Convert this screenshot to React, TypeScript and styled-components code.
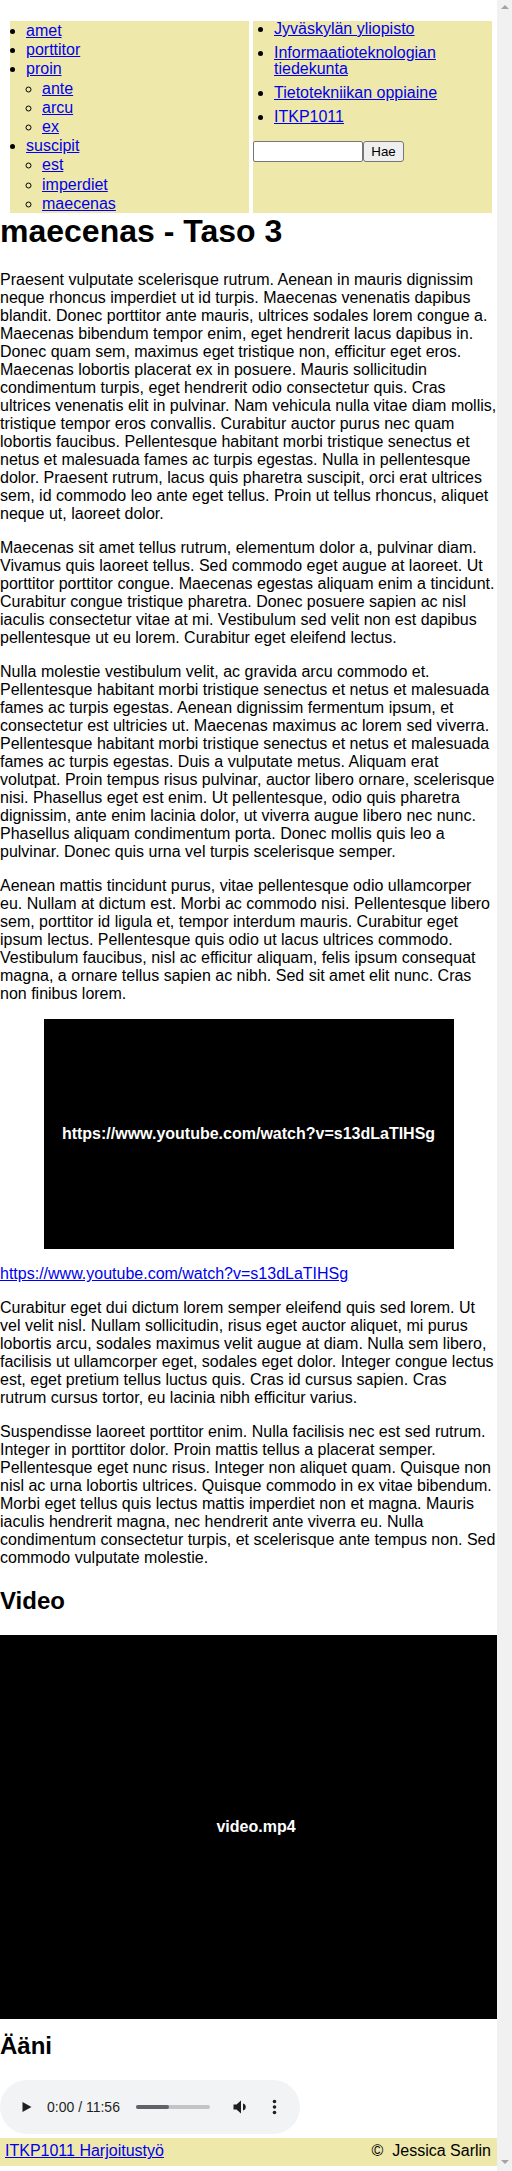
import styled, { createGlobalStyle } from 'styled-components';

const GlobalStyle = createGlobalStyle`
  html, body {
    margin: 0;
    padding: 0;
    background: #fff;
  }
  body {
    font-family: "Liberation Sans", Arial, sans-serif;
    font-size: 16px;
    color: #000;
  }
  a {
    color: #0000ee;
  }
`;

const Page = styled.div`
  display: flex;
  height: 100vh;
  overflow: hidden;
`;

const Main = styled.div`
  width: 497px;
  flex: none;
`;

const Scrollbar = styled.div`
  width: 15px;
  flex: none;
  box-sizing: border-box;
  padding: 5px 0 7px;
  background: #f1f1f1;
  display: flex;
  flex-direction: column;
  justify-content: space-between;
  align-items: center;
`;

const ScrollArrow = styled.span<{ $down?: boolean }>`
  width: 0;
  height: 0;
  border-left: 4px solid transparent;
  border-right: 4px solid transparent;
  ${({ $down }) =>
    $down ? 'border-top: 4px solid #a3a3a3;' : 'border-bottom: 4px solid #a3a3a3;'}
`;

const Header = styled.header`
  display: grid;
  grid-template-columns: 239px 239px;
  column-gap: 4px;
  padding: 21px 0 0 10px;
`;

const NavPanel = styled.nav`
  background: #eee8aa;
`;

const MenuList = styled.ul`
  margin: 0;
  padding-left: 16px;
  list-style: disc;
  line-height: 19.2px;
`;

const SubMenuList = styled.ul`
  margin: 0;
  padding-left: 16px;
  list-style: circle;
`;

const CrumbList = styled.ul`
  margin: 0;
  padding-left: 21px;
  list-style: disc;
`;

const CrumbItem = styled.li`
  line-height: 16px;
  margin-bottom: 8px;
`;

// margin collapses with the last crumb's 8px, so 16px lands the field at y=141
const SearchForm = styled.form`
  display: flex;
  margin-top: 16px;
`;

const SearchInput = styled.input`
  box-sizing: border-box;
  width: 110px;
  height: 21px;
  margin: 0;
  padding: 1px 2px;
  border: 1px solid #767676;
  border-radius: 2px;
  background: #fff;
  font: 13.33px "Liberation Sans", Arial, sans-serif;
`;

const SearchButton = styled.button`
  box-sizing: border-box;
  width: 41px;
  height: 21px;
  margin: 0;
  padding: 1px 6px;
  border: 1px solid #767676;
  border-radius: 3px;
  background: #efefef;
  color: #000;
  font: 13.33px "Liberation Sans", Arial, sans-serif;
`;

const Title = styled.h1`
  margin: 0 0 21.44px;
  font-size: 32px;
  line-height: 37px;
  font-weight: 700;
`;

const SectionTitle = styled.h2<{ $top?: number; $bottom?: number }>`
  margin: ${({ $top = 19.92 }) => $top}px 0 ${({ $bottom = 19.92 }) => $bottom}px;
  font-size: 24px;
  line-height: 27.6px;
  font-weight: 700;
`;

const Para = styled.p`
  margin: 16px 0;
  line-height: 18px;
`;

// $shift: the video label is centred on the full window, under the scrollbar too
const MediaBox = styled.div<{ $width: string; $height: number; $shift?: number }>`
  box-sizing: border-box;
  width: ${({ $width }) => $width};
  height: ${({ $height }) => $height}px;
  margin: 0 auto;
  padding-left: ${({ $shift = 0 }) => $shift}px;
  background: #000;
  color: #fff;
  font-weight: 700;
  display: flex;
  align-items: center;
  justify-content: center;
`;

const AudioPlayer = styled.div`
  box-sizing: border-box;
  width: 300px;
  height: 54px;
  margin-bottom: 4px;
  padding-left: 22px;
  border-radius: 27px;
  background: #f1f3f4;
  display: flex;
  align-items: center;
  color: #1f1f1f;
`;

const TimeLabel = styled.span`
  margin-left: 15px;
  width: 74px;
  font-size: 14px;
  white-space: nowrap;
`;

const Track = styled.div`
  margin-left: 15px;
  width: 74px;
  height: 4px;
  border-radius: 2px;
  background: #c4c4c4;
  display: flex;
`;

const TrackFill = styled.div`
  width: 33px;
  border-radius: 2px;
  background: #5f6368;
`;

const ControlIcon = styled.svg<{ $gap: number }>`
  margin-left: ${({ $gap }) => $gap}px;
  flex: none;
  fill: #1f1f1f;
`;

const Footer = styled.footer`
  display: flex;
  justify-content: space-between;
  padding: 4px 6px 6px 5px;
  line-height: 18px;
  background: #eee8aa;
`;

export default function App() {
  return (
    <Page>
      <GlobalStyle />
      <Main>
        <Header>
          <NavPanel>
            <MenuList>
              <li><a href="#">amet</a></li>
              <li><a href="#">porttitor</a></li>
              <li>
                <a href="#">proin</a>
                <SubMenuList>
                  <li><a href="#">ante</a></li>
                  <li><a href="#">arcu</a></li>
                  <li><a href="#">ex</a></li>
                </SubMenuList>
              </li>
              <li>
                <a href="#">suscipit</a>
                <SubMenuList>
                  <li><a href="#">est</a></li>
                  <li><a href="#">imperdiet</a></li>
                  <li><a href="#">maecenas</a></li>
                </SubMenuList>
              </li>
            </MenuList>
          </NavPanel>
          <NavPanel>
            <CrumbList>
              <CrumbItem><a href="#">Jyväskylän yliopisto</a></CrumbItem>
              <CrumbItem><a href="#">Informaatioteknologian tiedekunta</a></CrumbItem>
              <CrumbItem><a href="#">Tietotekniikan oppiaine</a></CrumbItem>
              <CrumbItem><a href="#">ITKP1011</a></CrumbItem>
            </CrumbList>
            <SearchForm onSubmit={(e) => e.preventDefault()}>
              <SearchInput type="text" />
              <SearchButton type="submit">Hae</SearchButton>
            </SearchForm>
          </NavPanel>
        </Header>

        <Title>maecenas - Taso 3</Title>

        <Para>
          Praesent vulputate scelerisque rutrum. Aenean in mauris dignissim neque rhoncus imperdiet ut id
          turpis. Maecenas venenatis dapibus blandit. Donec porttitor ante mauris, ultrices sodales lorem
          congue a. Maecenas bibendum tempor enim, eget hendrerit lacus dapibus in. Donec quam sem, maximus
          eget tristique non, efficitur eget eros. Maecenas lobortis placerat ex in posuere. Mauris
          sollicitudin condimentum turpis, eget hendrerit odio consectetur quis. Cras ultrices venenatis elit
          in pulvinar. Nam vehicula nulla vitae diam mollis, tristique tempor eros convallis. Curabitur auctor
          purus nec quam lobortis faucibus. Pellentesque habitant morbi tristique senectus et netus et
          malesuada fames ac turpis egestas. Nulla in pellentesque dolor. Praesent rutrum, lacus quis pharetra
          suscipit, orci erat ultrices sem, id commodo leo ante eget tellus. Proin ut tellus rhoncus, aliquet
          neque ut, laoreet dolor.
        </Para>
        <Para>
          Maecenas sit amet tellus rutrum, elementum dolor a, pulvinar diam. Vivamus quis laoreet tellus. Sed
          commodo eget augue at laoreet. Ut porttitor porttitor congue. Maecenas egestas aliquam enim a
          tincidunt. Curabitur congue tristique pharetra. Donec posuere sapien ac nisl iaculis consectetur
          vitae at mi. Vestibulum sed velit non est dapibus pellentesque ut eu lorem. Curabitur eget eleifend
          lectus.
        </Para>
        <Para>
          Nulla molestie vestibulum velit, ac gravida arcu commodo et. Pellentesque habitant morbi tristique
          senectus et netus et malesuada fames ac turpis egestas. Aenean dignissim fermentum ipsum, et
          consectetur est ultricies ut. Maecenas maximus ac lorem sed viverra. Pellentesque habitant morbi
          tristique senectus et netus et malesuada fames ac turpis egestas. Duis a vulputate metus. Aliquam
          erat volutpat. Proin tempus risus pulvinar, auctor libero ornare, scelerisque nisi. Phasellus eget
          est enim. Ut pellentesque, odio quis pharetra dignissim, ante enim lacinia dolor, ut viverra augue
          libero nec nunc. Phasellus aliquam condimentum porta. Donec mollis quis leo a pulvinar. Donec quis
          urna vel turpis scelerisque semper.
        </Para>
        <Para>
          Aenean mattis tincidunt purus, vitae pellentesque odio ullamcorper eu. Nullam at dictum est. Morbi
          ac commodo nisi. Pellentesque libero sem, porttitor id ligula et, tempor interdum mauris. Curabitur
          eget ipsum lectus. Pellentesque quis odio ut lacus ultrices commodo. Vestibulum faucibus, nisl ac
          efficitur aliquam, felis ipsum consequat magna, a ornare tellus sapien ac nibh. Sed sit amet elit
          nunc. Cras non finibus lorem.
        </Para>

        <MediaBox $width="410px" $height={230}>https://www.youtube.com/watch?v=s13dLaTIHSg</MediaBox>

        <Para>
          <a href="#">https://www.youtube.com/watch?v=s13dLaTIHSg</a>
        </Para>
        <Para>
          Curabitur eget dui dictum lorem semper eleifend quis sed lorem. Ut vel velit nisl. Nullam
          sollicitudin, risus eget auctor aliquet, mi purus lobortis arcu, sodales maximus velit augue at
          diam. Nulla sem libero, facilisis ut ullamcorper eget, sodales eget dolor. Integer congue lectus
          est, eget pretium tellus luctus quis. Cras id cursus sapien. Cras rutrum cursus tortor, eu lacinia
          nibh efficitur varius.
        </Para>
        <Para>
          Suspendisse laoreet porttitor enim. Nulla facilisis nec est sed rutrum. Integer in porttitor dolor.
          Proin mattis tellus a placerat semper. Pellentesque eget nunc risus. Integer non aliquet quam.
          Quisque non nisl ac urna lobortis ultrices. Quisque commodo in ex vitae bibendum. Morbi eget tellus
          quis lectus mattis imperdiet non et magna. Mauris iaculis hendrerit magna, nec hendrerit ante
          viverra eu. Nulla condimentum consectetur turpis, et scelerisque ante tempus non. Sed commodo
          vulputate molestie.
        </Para>

        <SectionTitle>Video</SectionTitle>
        <MediaBox $width="100%" $height={384} $shift={15}>video.mp4</MediaBox>

        <SectionTitle $top={13} $bottom={21}>Ääni</SectionTitle>
        <AudioPlayer>
          <ControlIcon $gap={0} width="10" height="10" viewBox="0 0 10 10">
            <path d="M0.5 0 L9.5 5 L0.5 10 Z" />
          </ControlIcon>
          <TimeLabel>0:00 / 11:56</TimeLabel>
          <Track>
            <TrackFill />
          </Track>
          <ControlIcon $gap={23} width="16" height="16" viewBox="0 0 16 16">
            <path d="M0.5 5.5 H3.5 L8 1.5 V14.5 L3.5 10.5 H0.5 Z" />
            <path d="M10 4.5 A3.6 3.6 0 0 1 10 11.5 Z" />
          </ControlIcon>
          <ControlIcon $gap={23} width="5" height="16" viewBox="0 0 5 16">
            <circle cx="2.5" cy="2.5" r="1.8" />
            <circle cx="2.5" cy="8" r="1.8" />
            <circle cx="2.5" cy="13.5" r="1.8" />
          </ControlIcon>
        </AudioPlayer>

        <Footer>
          <a href="#">ITKP1011 Harjoitustyö</a>
          <span>©&nbsp; Jessica Sarlin</span>
        </Footer>
      </Main>
      <Scrollbar>
        <ScrollArrow />
        <ScrollArrow $down />
      </Scrollbar>
    </Page>
  );
}
